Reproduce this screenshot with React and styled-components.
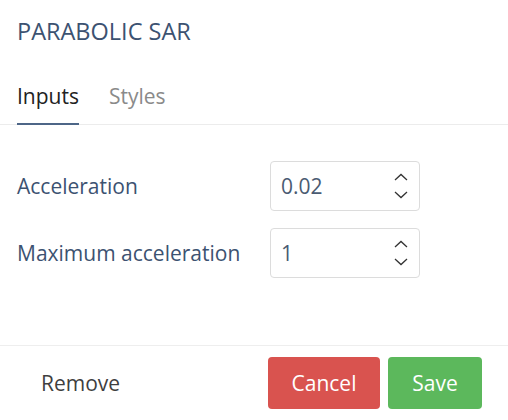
import React from "react";
import styled, { createGlobalStyle } from "styled-components";

const Global = createGlobalStyle`
  html, body { margin: 0; padding: 0; background: #fff; }
  body { font-family: "Open Sans", "Noto Sans", sans-serif; }
  * { box-sizing: border-box; }
`;

const Dialog = styled.div`
  width: 508px;
  height: 420px;
  display: flex;
  flex-direction: column;
  background: #fff;
`;

const Title = styled.h1`
  margin: 0;
  padding: 15px 17px 0;
  font-size: 23.5px;
  font-weight: 400;
  line-height: 32px;
  color: #3c5271;
`;

const Tabs = styled.div`
  display: flex;
  gap: 30px;
  padding: 0 17px;
  margin-top: 35px;
  border-bottom: 1px solid #ececec;
`;

const Tab = styled.div`
  font-size: 21px;
  line-height: 28px;
  padding-bottom: 13px;
  color: ${(p) => (p.$active ? "#222" : "#8a8a8a")};
  border-bottom: 2px solid ${(p) => (p.$active ? "#4d6687" : "transparent")};
  margin-bottom: -1px;
`;

const Body = styled.div`
  flex: 1;
  padding: 36px 17px 0;
  display: flex;
  flex-direction: column;
  gap: 17px;
`;

const Row = styled.div`
  display: grid;
  grid-template-columns: 253px 150px;
  align-items: center;
`;

const Label = styled.label`
  font-size: 21px;
  color: #3c5271;
`;

const Field = styled.div`
  height: 50px;
  border: 1px solid #dcdcdc;
  border-radius: 4px;
  display: flex;
  align-items: center;
  padding: 0 11px 0 10px;
`;

const Value = styled.span`
  flex: 1;
  font-size: 21px;
  color: #4a5b72;
`;

const Spinner = styled.div`
  display: flex;
  flex-direction: column;
  gap: 10px;
`;

const Footer = styled.div`
  border-top: 1px solid #eeeeee;
  height: 75px;
  display: flex;
  align-items: center;
  padding: 0 26px 0 41px;
`;

const RemoveBtn = styled.span`
  font-size: 21px;
  color: #3f3f3f;
  margin-right: auto;
`;

const Button = styled.button`
  height: 52px;
  border: none;
  border-radius: 4px;
  font-family: inherit;
  font-size: 21px;
  color: #fff;
  background: ${(p) => p.$bg};
  width: ${(p) => p.$w}px;
  margin-left: ${(p) => p.$ml || 0}px;
`;

const Chevron = ({ up }) => (
  <svg width="14" height="8" viewBox="0 0 14 8">
    <path
      d={up ? "M1 7 L7 1.5 L13 7" : "M1 1 L7 6.5 L13 1"}
      fill="none"
      stroke="#333"
      strokeWidth="1.3"
    />
  </svg>
);

const NumberInput = ({ value }) => (
  <Field>
    <Value>{value}</Value>
    <Spinner>
      <Chevron up />
      <Chevron />
    </Spinner>
  </Field>
);

export default function App() {
  return (
    <>
      <Global />
      <Dialog>
        <Title>PARABOLIC SAR</Title>
        <Tabs>
          <Tab $active>Inputs</Tab>
          <Tab>Styles</Tab>
        </Tabs>
        <Body>
          <Row>
            <Label>Acceleration</Label>
            <NumberInput value="0.02" />
          </Row>
          <Row>
            <Label>Maximum acceleration</Label>
            <NumberInput value="1" />
          </Row>
        </Body>
        <Footer>
          <RemoveBtn>Remove</RemoveBtn>
          <Button $bg="#d9534f" $w={112}>Cancel</Button>
          <Button $bg="#5cb85c" $w={94} $ml={8}>Save</Button>
        </Footer>
      </Dialog>
    </>
  );
}
